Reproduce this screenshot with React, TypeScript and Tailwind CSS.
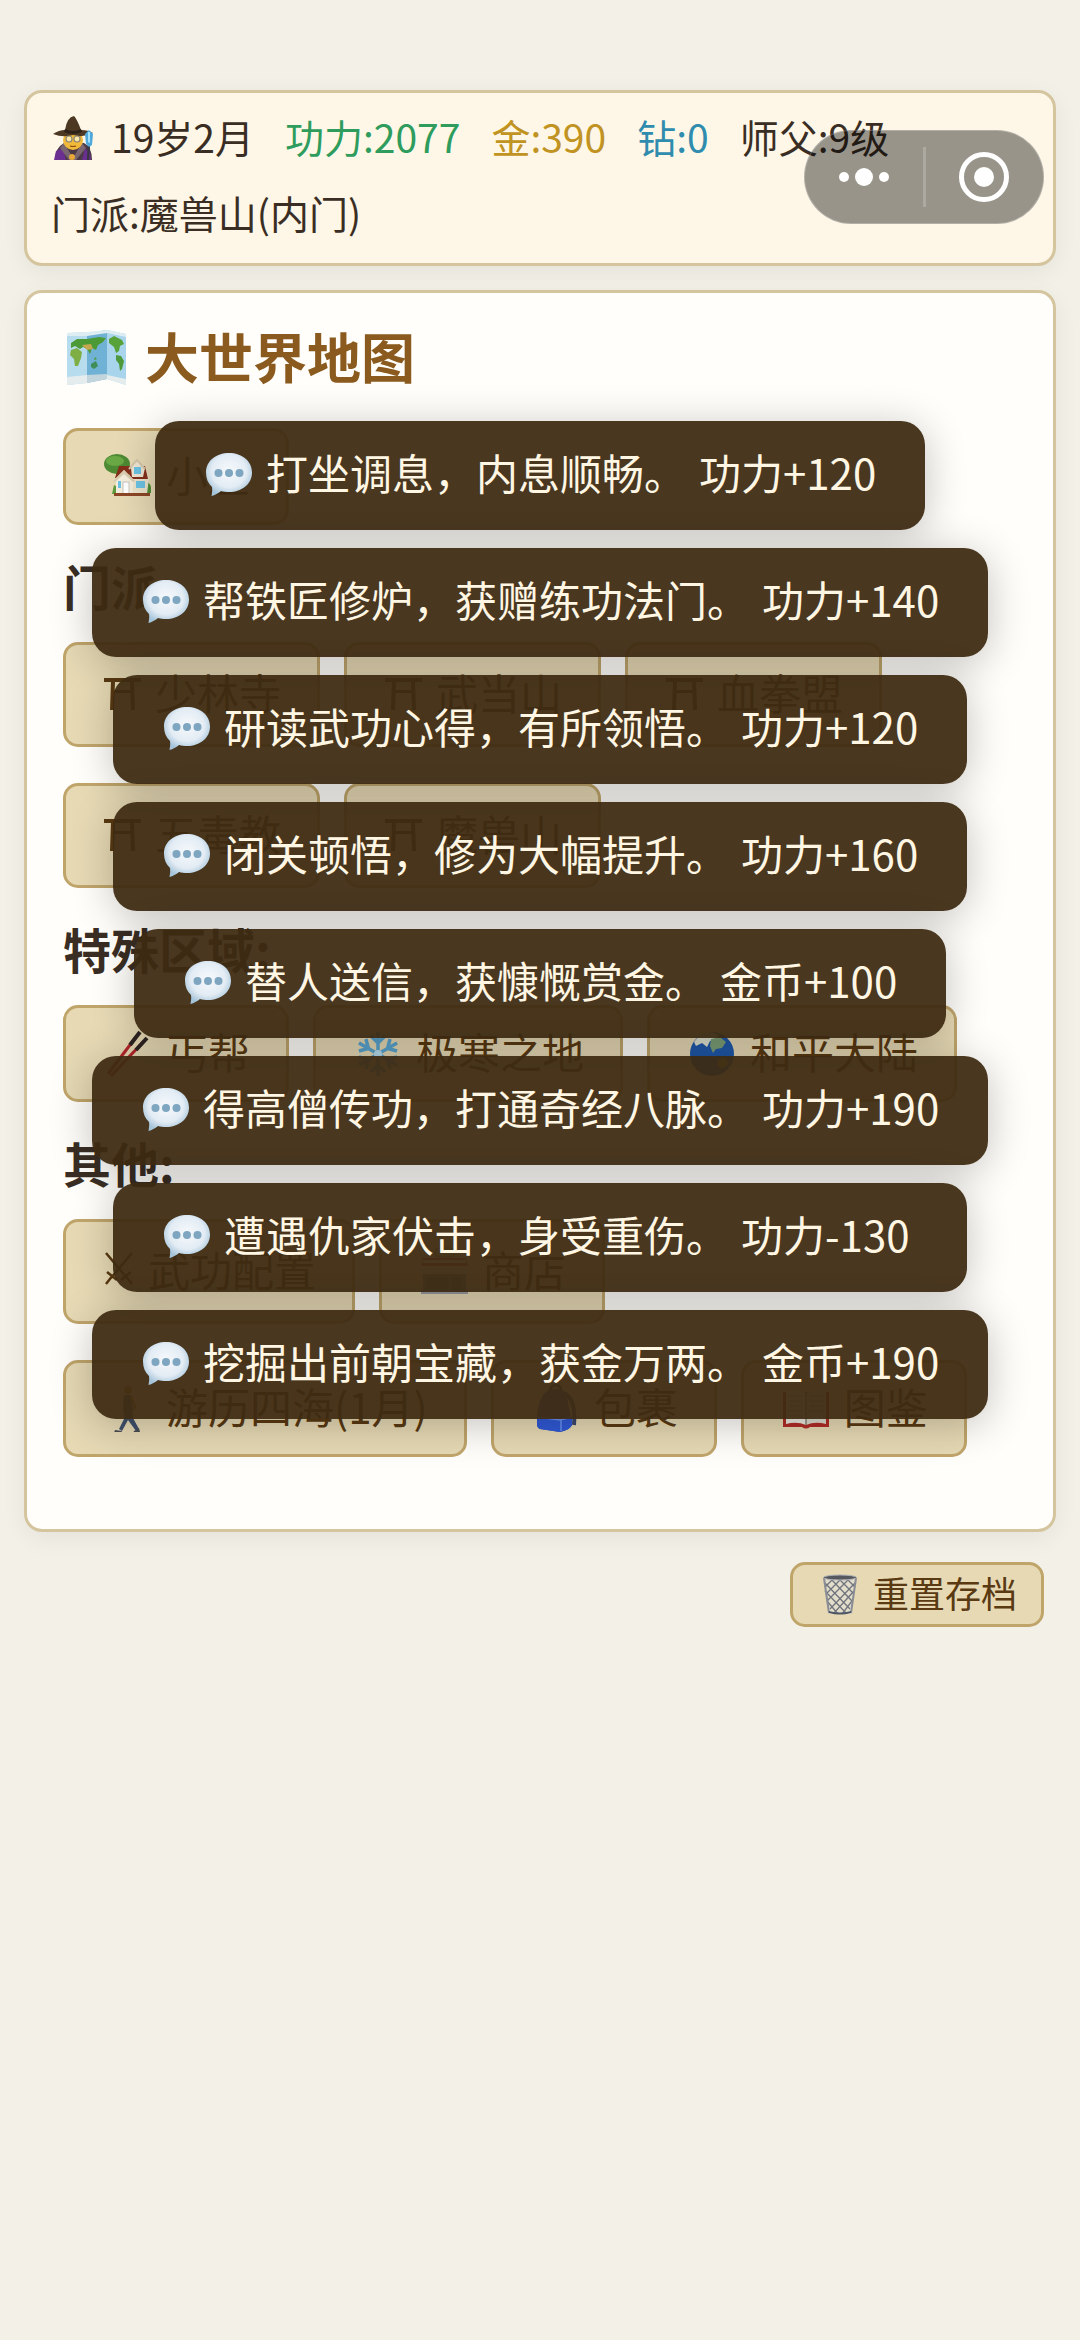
import { useId, type ReactNode } from "react";

function Mage() {
  return (
    <svg viewBox="0 -2 48 48" className="h-12 w-12 shrink-0" aria-hidden="true">
      <path d="M4 46 Q4 34 13 29 L33 29 Q41 33 41 46Z" fill="#4b3a45" />
      <path d="M3 46 L5 37 L12 34 L15 46Z" fill="#6b2f91" />
      <path d="M31 46 L34 35 L39 38 L40 46Z" fill="#6b2f91" />
      <path d="M13 29 L22 44 L31 29 L35 34 L25 46 L18 46 L9 34Z" fill="#7a6670" />
      <circle cx="22" cy="26" r="10" fill="#f0b93a" />
      <path d="M2 20 Q8 16 14 16 Q16 3 23 2 Q26 5 30 16 Q37 16 42 19 Q32 24 22 21 Q12 24 2 20Z" fill="#4d3824" />
      <path d="M14 15 Q22 19 30 15 L31 18 Q22 22 13 18Z" fill="#2e2118" />
      <circle cx="18" cy="25" r="3" fill="#fbe7a8" stroke="#8c8579" strokeWidth="1.2" />
      <circle cx="26" cy="25" r="3" fill="#fbe7a8" stroke="#8c8579" strokeWidth="1.2" />
      <path d="M19 32 Q22 33 25 32" stroke="#8a4b16" strokeWidth="1.2" fill="none" />
      <circle cx="21" cy="43" r="3" fill="#e8a838" />
      <path d="M38 30 L37 46" stroke="#3a3742" strokeWidth="2.4" />
      <path d="M34 20 L38 16 L42 20 L41 31 L38 33 L35 30Z" fill="#4fa9dd" />
      <path d="M37 18 L39 18 L39 29 L37 28Z" fill="#a6e2fb" />
    </svg>
  );
}

function WorldMap() {
  return (
    <svg viewBox="-2 -2 64 60" className="h-[60px] w-16 shrink-0" aria-hidden="true">
      <path d="M2 5 L22 4 L22 55 L2 57Z" fill="#b7dcee" />
      <path d="M22 5 L42 2 L42 51 L22 55Z" fill="#70b2d6" />
      <path d="M42 2 L61 6 L61 57 L42 51Z" fill="#a8d5ec" />
      <path d="M2 49 L22 47 L22 55 L2 57Z M42 47 L61 51 L61 57 L42 51Z" fill="#e4eced" />
      <path d="M22 47 L42 46 L42 51 L22 55Z" fill="#c3d5dc" />
      <path d="M2 5 L22 4 L42 2 L61 6 L61 9 L42 5 L22 8 L2 8Z" fill="#deedf2" />
      <path d="M6 15 L12 11 L22 11 L34 9 L41 10 L38 14 L33 17 L31 22 L27 20 L25 26 L22 21 L18 19 L15 21 L10 18 L6 20Z" fill="#4c9a35" />
      <path d="M6 22 L12 20 L17 24 L16 30 L13 38 L10 38 L9 31 L5 27Z" fill="#7fae45" />
      <path d="M17 17 L26 16 L28 21 L22 22Z" fill="#c3a850" />
      <path d="M26 36 L31 33 L33 38 L29 41 L26 39Z" fill="#3f8d57" />
      <path d="M30 29 L32 31 L29 32Z" fill="#4c9a35" />
      <path d="M44 11 L49 8 L57 12 L59 16 L55 18 L54 23 L51 25 L49 19 L44 15Z" fill="#58a23a" />
      <path d="M51 27 L56 28 L59 33 L57 41 L55 43 L54 36 L51 32Z" fill="#4d9a3d" />
    </svg>
  );
}

function SpeechBubble() {
  const id = useId();
  return (
    <svg viewBox="0 -2 50 50" className="h-[50px] w-[50px] shrink-0" aria-hidden="true">
      <defs>
        <radialGradient id={id} cx="50%" cy="42%" r="58%">
          <stop offset="0%" stopColor="#f6f9fc" />
          <stop offset="65%" stopColor="#e3ecf4" />
          <stop offset="100%" stopColor="#a5c4da" />
        </radialGradient>
      </defs>
      <path
        d="M26 4 C39 4 49 12 49 23.500 C49 35 39 43 26 43 C23 43 20.500 42.800 18 42 C15 44.500 12 46 8.500 47 C9 43.500 9.500 41 9 38 C5 34.500 3 29.500 3 23.500 C3 12 13 4 26 4Z"
        fill={`url(#${id})`}
      />
      <circle cx="15.500" cy="24" r="4" fill="#7ea6c0" />
      <circle cx="26" cy="24" r="4" fill="#7ea6c0" />
      <circle cx="36.500" cy="24" r="4" fill="#7ea6c0" />
    </svg>
  );
}

function IconBox({ children }: { children: ReactNode }) {
  return (
    <svg viewBox="0 -3 52 52" className="h-[52px] w-[52px] shrink-0" aria-hidden="true">
      {children}
    </svg>
  );
}

function House() {
  return (
    <IconBox>
      <path d="M14 18 L18 18 L19 32 L15 32Z" fill="#6b4a25" />
      <ellipse cx="15" cy="13" rx="13" ry="10" fill="#4d8a33" />
      <ellipse cx="13" cy="10" rx="9" ry="5" fill="#6aa845" />
      <path d="M43 31 Q50 30 49 42 L43 42Z" fill="#4f8e34" />
      <path d="M12 34 Q17 36 16 43 L10 43Z" fill="#5d9a3c" />
      <path d="M14 25 L22 16 L43 16 L47 27 L45 43 L14 43Z" fill="#ece3cb" />
      <path d="M17 15 L29 15 L27 28 L13 27Z" fill="#84301b" />
      <path d="M27 17 L43 15 L46 28 L28 28Z" fill="#84301b" />
      <path d="M12 29 L22 19 L32 29 L30 43 L14 43 L14 29Z" fill="#f4eddb" />
      <path d="M11 30 L22 19 L33 30 L31 31 L22 23 L13 31Z" fill="#d9ccb0" />
      <path d="M29 17 L35 10 L43 17 L41 26 L30 26Z" fill="#efe6d2" />
      <path d="M27 18 L35 9 L43 18" stroke="#d4c6aa" strokeWidth="2" fill="none" />
      <rect x="32" y="16" width="7" height="7" fill="#6cc3e3" />
      <rect x="34" y="30" width="9" height="7" fill="#6cc3e3" />
      <rect x="16" y="30" width="3" height="7" fill="#6cc3e3" />
      <rect x="21" y="31" width="6" height="12" fill="#fff" stroke="#c9c6bf" />
      <path d="M12 42 H48 V45 H12Z" fill="#8c4626" />
    </IconBox>
  );
}

function Torii() {
  return (
    <svg viewBox="0 -3 41 52" className="h-[52px] w-[41px] shrink-0" aria-hidden="true">
      <path d="M2 9 H39 V13 H2Z M12 21 H29 V24 H12Z M9 12 H13 L12 41 H8Z M28 12 H32 L33 41 H29Z" fill="#5a3a12" />
    </svg>
  );
}

function Chopsticks() {
  return (
    <IconBox>
      <path d="M6 46 L34 9" stroke="#b3262b" strokeWidth="3" />
      <path d="M9 48 L42 13" stroke="#b3262b" strokeWidth="3" />
      <path d="M28 17 L38 4 M34 22 L45 10" stroke="#2d2523" strokeWidth="4" />
    </IconBox>
  );
}

function Snowflake() {
  return (
    <IconBox>
      <g stroke="#5aa6d0" strokeWidth="3.500" fill="none">
        {[0, 60, 120, 180, 240, 300].map((deg) => (
          <path key={deg} d="M26 26 V4 M19 8 L26 15 L33 8" transform={`rotate(${deg} 26 26)`} />
        ))}
      </g>
      <circle cx="26" cy="26" r="4" fill="#b9def0" />
    </IconBox>
  );
}

function Globe() {
  return (
    <IconBox>
      <circle cx="26" cy="26" r="22" fill="#2059ab" />
      <path d="M8 14 Q15 4 26 4 L33 7 L30 12 L24 13 L21 19 L16 15 L10 18Z" fill="#dfe3d0" />
      <path d="M25 11 L34 9 L40 14 L36 20 L30 21 L27 25 L24 18Z" fill="#7d9f78" />
      <path d="M32 31 L40 30 L43 36 L36 41 L31 37Z" fill="#9d9a52" />
    </IconBox>
  );
}

function Swords() {
  return (
    <svg viewBox="0 -2 34 52" className="h-[52px] w-[34px] shrink-0" aria-hidden="true">
      <path
        d="M4 8 L25 33 M30 8 L9 33 M19 35 L29 27 M15 35 L5 27 M23 30 L30 39 M11 30 L4 39"
        stroke="#5a3a12"
        strokeWidth="2.500"
        fill="none"
      />
    </svg>
  );
}

function Store() {
  return (
    <IconBox>
      <rect x="17" y="2" width="20" height="9" rx="4" fill="#d2d0a8" stroke="#7b805f" />
      <path d="M5 12 H48 L50 20 H3Z" fill="#b7584a" />
      <path d="M5 14 H48 V17 H5Z" fill="#efe3d1" />
      <path d="M3 20 H50 V26 Q47 30 43 26 Q39 30 35 26 Q31 30 27 26 Q23 30 19 26 Q15 30 11 26 Q7 30 3 26Z" fill="#e0dfcc" />
      <path d="M5 28 H48 V45 H5Z" fill="#8a9a9b" />
      <path d="M9 31 H30 V43 H9Z M34 31 H44 V45 H34Z" fill="#5d7d86" />
      <path d="M3 44 H50 V48 H3Z" fill="#9b9ba2" />
    </IconBox>
  );
}

function Walker() {
  return (
    <IconBox>
      <circle cx="26" cy="7" r="4" fill="#c98a2f" />
      <path d="M22 12 L29 12 L31 26 L21 28Z" fill="#4b6477" />
      <path d="M29 14 L33 24 L30 27" stroke="#b98a3c" strokeWidth="2.500" fill="none" />
      <path d="M22 26 L30 25 L31 35 L37 46 L34 48 L26 37 L20 48 L17 46 L22 36Z" fill="#41506c" />
      <path d="M13 47 L20 48 L19 50 L12 50Z M32 48 L37 45 L38 49 L31 50Z" fill="#4b4d55" />
    </IconBox>
  );
}

function Backpack() {
  return (
    <IconBox>
      <path d="M20 8 Q21 2 26 2 Q31 2 31 8" stroke="#33415f" strokeWidth="2.500" fill="none" />
      <path d="M34 10 Q46 16 44 42" stroke="#3a4770" strokeWidth="4" fill="none" />
      <path d="M13 12 Q17 6 26 6 Q36 6 37 14 L42 42 Q40 47 30 49 L10 46 Q7 45 7 41 Q6 24 13 12Z" fill="#4356a5" />
      <path d="M7 34 L30 37 L42 34 V42 Q40 47 30 49 L10 46 Q7 45 7 41Z" fill="#3059d6" />
      <path d="M31 37 V48 M8 34 L30 37 L42 34" stroke="#6b91f0" strokeWidth="1.500" fill="none" />
    </IconBox>
  );
}

function OpenBook() {
  return (
    <IconBox>
      <path d="M3 9 H49 V44 H30 Q26 47 22 44 H3Z" fill="#b32c27" />
      <path d="M6 7 Q18 6 26 10 V42 Q17 38 6 41Z" fill="#ece9df" />
      <path d="M46 7 Q34 6 26 10 V42 Q35 38 46 41Z" fill="#ddd9cc" />
      <path d="M26 10 V42" stroke="#8b8478" strokeWidth="1.500" />
      <path d="M9 13 H22 M9 18 H22 M9 23 H22 M9 28 H22 M9 33 H22 M30 13 H43 M30 18 H43 M30 23 H43 M30 28 H43" stroke="#a8a294" />
    </IconBox>
  );
}

function Wastebasket() {
  return (
    <svg viewBox="-1 -2 44 44" className="h-11 w-11 shrink-0" aria-hidden="true">
      <path d="M6 4 H38 L33 41 H11Z" fill="#e3ddcb" />
      <path
        d="M7 10 L32 36 M7 18 L28 40 M12 5 L34 28 M20 5 L36 21 M28 5 L37 14 M9 28 L20 41 M37 10 L12 36 M36 18 L16 40 M32 5 L9 28 M24 5 L8 21 M16 5 L7 14 M34 28 L24 41"
        stroke="#70747c"
        strokeWidth="1.300"
        fill="none"
      />
      <path d="M6 5 L11 40 M38 5 L33 40" stroke="#8a8d94" strokeWidth="2" />
      <ellipse cx="22" cy="4.500" rx="16.500" ry="2.500" fill="#55585f" stroke="#aeb1b5" />
      <path d="M11 38 Q22 41 33 38 L33 40 Q22 43 11 40Z" fill="#4d5664" />
    </svg>
  );
}

type Place = { label: string; icon: ReactNode; glyph?: boolean };

const home: Place[] = [{ label: "小屋", icon: <House /> }];

const sections: { title: string; places: Place[] }[] = [
  {
    title: "门派:",
    places: [
      { label: "少林寺", icon: <Torii />, glyph: true },
      { label: "武当山", icon: <Torii />, glyph: true },
      { label: "血拳盟", icon: <Torii />, glyph: true },
      { label: "五毒教", icon: <Torii />, glyph: true },
      { label: "魔兽山", icon: <Torii />, glyph: true },
    ],
  },
  {
    title: "特殊区域:",
    places: [
      { label: "丐帮", icon: <Chopsticks /> },
      { label: "极寒之地", icon: <Snowflake /> },
      { label: "和平大陆", icon: <Globe /> },
    ],
  },
  {
    title: "其他:",
    places: [
      { label: "武功配置", icon: <Swords />, glyph: true },
      { label: "商店", icon: <Store /> },
      { label: "游历四海(1月)", icon: <Walker /> },
      { label: "包裹", icon: <Backpack /> },
      { label: "图鉴", icon: <OpenBook /> },
    ],
  },
];

const toasts = [
  { message: "打坐调息，内息顺畅。", effect: "功力+120" },
  { message: "帮铁匠修炉，获赠练功法门。", effect: "功力+140" },
  { message: "研读武功心得，有所领悟。", effect: "功力+120" },
  { message: "闭关顿悟，修为大幅提升。", effect: "功力+160" },
  { message: "替人送信，获慷慨赏金。", effect: "金币+100" },
  { message: "得高僧传功，打通奇经八脉。", effect: "功力+190" },
  { message: "遭遇仇家伏击，身受重伤。", effect: "功力-130" },
  { message: "挖掘出前朝宝藏，获金万两。", effect: "金币+190" },
];

function PlaceRow({ places }: { places: Place[] }) {
  return (
    <div className="flex flex-wrap gap-x-6 gap-y-9">
      {places.map(({ label, icon, glyph }) => (
        <button
          key={label}
          type="button"
          className={`flex items-center gap-3 rounded-[15px] border-3 border-[#c0a56b] bg-[#e6d9b4] px-9 pt-[15px] pb-[21px] text-[42px] text-[#5a3a12] ${
            glyph ? "leading-[63px]" : "leading-[55px]"
          }`}
        >
          {icon}
          <span>{label}</span>
        </button>
      ))}
    </div>
  );
}

function Capsule() {
  return (
    <div className="absolute top-[130px] right-9 flex h-[94px] w-[240px] items-center rounded-full border border-white/25 bg-black/40">
      <button type="button" aria-label="更多" className="flex flex-1 items-center justify-center gap-[6px]">
        <span className="h-[10px] w-[10px] rounded-full bg-white" />
        <span className="h-[18px] w-[18px] rounded-full bg-white" />
        <span className="h-[10px] w-[10px] rounded-full bg-white" />
      </button>
      <span className="h-[60px] w-[3px] bg-white/20" />
      <button type="button" aria-label="关闭" className="flex flex-1 items-center justify-center">
        <span className="flex h-[50px] w-[50px] items-center justify-center rounded-full border-5 border-white">
          <span className="h-5 w-5 rounded-full bg-white" />
        </span>
      </button>
    </div>
  );
}

export default function App() {
  return (
    <div className="relative min-h-screen bg-[#f3f0e8] px-6 pt-[90px] font-['Noto_Sans_CJK_SC',sans-serif] text-[#3a2e24]">
      <header className="flex flex-wrap gap-x-[31px] gap-y-[14px] rounded-[18px] border-3 border-[#d4c59e] bg-[#fef7e7] px-6 pt-3 pb-5 text-[39px] leading-[62px] shadow-[0_6px_24px_rgba(0,0,0,0.06)]">
        <span className="flex items-center gap-3">
          <Mage />
          19岁2月
        </span>
        <span className="text-[#2e9c5c]">功力:2077</span>
        <span className="text-[#c19322]">金:390</span>
        <span className="text-[#2f8cae]">钻:0</span>
        <span>师父:9级</span>
        <span>门派:魔兽山(内门)</span>
      </header>

      <main className="mt-6 rounded-[18px] border-3 border-[#d4c59e] bg-[#fffefa] px-9 pt-[33px] pb-[72px] shadow-[0_6px_24px_rgba(0,0,0,0.06)]">
        <h1 className="mb-[42px] flex items-center gap-[18px] text-[54px] leading-[60px] font-bold text-[#8b5a1e]">
          <WorldMap />
          大世界地图
        </h1>
        <PlaceRow places={home} />
        {sections.map(({ title, places }) => (
          <section key={title}>
            <h2 className="mt-[21px] mb-[18px] text-[48px] leading-[78px] font-bold">{title}</h2>
            <PlaceRow places={places} />
          </section>
        ))}
      </main>

      <div className="mt-[30px] flex justify-end pr-3">
        <button
          type="button"
          className="flex items-center gap-3 rounded-[15px] border-3 border-[#c0a56b] bg-[#e6d9b4] px-6 pt-1 pb-2 text-[36px] leading-[47px] text-[#5a3a12]"
        >
          <Wastebasket />
          重置存档
        </button>
      </div>

      <div role="status" className="pointer-events-none absolute inset-x-0 top-[421px] flex flex-col items-center gap-[18px]">
        {toasts.map(({ message, effect }) => (
          <div
            key={message}
            className="flex items-center gap-[13px] rounded-[24px] bg-[#3e2a12]/94 px-12 pt-5 pb-7 text-[42px] leading-[61px] whitespace-nowrap text-[#fff6e3] shadow-[0_6px_42px_rgba(0,0,0,0.24)]"
          >
            <SpeechBubble />
            <span>{message}</span>
            <span className="min-w-[178px]">{effect}</span>
          </div>
        ))}
      </div>

      <Capsule />
    </div>
  );
}
